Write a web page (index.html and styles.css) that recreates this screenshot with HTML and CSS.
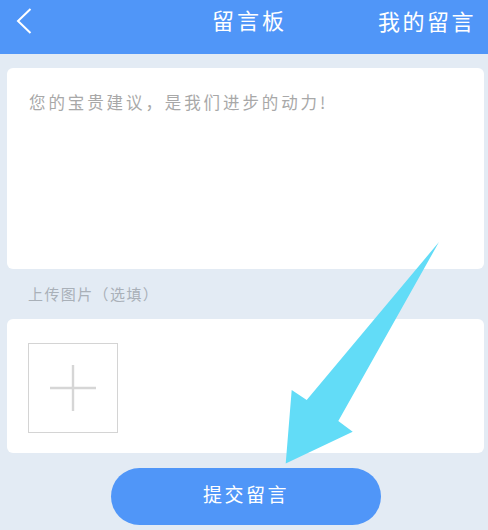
FILE: index.html
```html
<!DOCTYPE html>
<html lang="zh-CN">
<head>
<meta charset="utf-8">
<title>留言板</title>
<link rel="stylesheet" href="styles.css">
</head>
<body>
<div class="page">
  <header class="topbar">
    <svg class="back" width="18" height="28" viewBox="0 0 18 28" aria-hidden="true"><path d="M15.5 2 L3 14 L15.5 26" fill="none" stroke="#fff" stroke-width="2"/></svg>
    <h1 class="title">留言板</h1>
    <span class="mine">我的留言</span>
  </header>
  <main class="content">
    <section class="card message">您的宝贵建议，是我们进步的动力!</section>
    <div class="label">上传图片（选填）</div>
    <section class="card upload">
      <div class="add">
        <svg width="46" height="46" viewBox="0 0 46 46" aria-hidden="true"><path d="M0 23H46M23 0V46" stroke="#d6d6d6" stroke-width="2.4"/></svg>
      </div>
    </section>
    <button class="submit">提交留言</button>
  </main>
  <svg class="arrow" width="488" height="530" viewBox="0 0 488 530" aria-hidden="true"><polygon points="439,242 306.7,400 291.7,390 285.7,463.5 352.7,431.7 338.3,421" fill="#62dcf7"/></svg>
</div>
</body>
</html>
```
FILE: styles.css
```css
* { box-sizing: border-box; }
html, body { margin: 0; padding: 0; }
body { font-family: "Noto Sans CJK SC", "Liberation Serif", serif; background: #e3ebf4; }
.page { position: relative; width: 488px; height: 530px; overflow: hidden; background: #e3ebf4; }
.topbar { height: 54px; background: #5096f8; color: #fff; display: grid; grid-template-columns: 197px auto 1fr; align-items: center; padding: 0 12px 14px 15px; }
.back { display: block; margin-top: 1px; }
.title { margin: 0 0 2px; font-size: 22px; line-height: 30px; font-weight: 400; letter-spacing: 3px; white-space: nowrap; }
.mine { justify-self: end; font-size: 22px; line-height: 30px; font-weight: 400; letter-spacing: 2.5px; white-space: nowrap; }
.content { display: flex; flex-direction: column; padding: 14px 4px 0 7px; }
.card { background: #fff; border-radius: 6px; }
.message { height: 201px; padding: 21px 22px 0; font-size: 16.5px; line-height: 26px; letter-spacing: 2.9px; color: #a8a8a8; }
.label { height: 50px; padding: 15px 0 0 21px; font-size: 15px; line-height: 20px; letter-spacing: 1.4px; color: #a9b0b8; }
.upload { height: 134px; padding: 24px 21px; }
.add { width: 90px; height: 90px; border: 1px solid #d4d4d4; display: flex; align-items: center; justify-content: center; }
.add svg { display: block; }
.submit { align-self: flex-start; width: 270px; height: 57px; margin: 15px 0 0 104px; border: 0; border-radius: 28.5px; background: #5096f8; color: #fff; font-family: inherit; font-size: 19px; font-weight: 400; letter-spacing: 2.5px; padding: 0 0 6px; }
.arrow { position: absolute; left: 0; top: 0; pointer-events: none; }
```
